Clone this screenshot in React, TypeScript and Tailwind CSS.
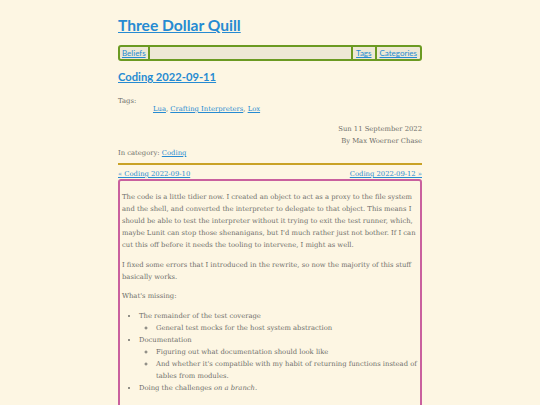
import React from "react";

const serif = "font-['DejaVu_Serif',serif]";
const sans = "font-['Lato','Open_Sans',sans-serif]";
const link = "text-[#268bd2] underline";

export default function App() {
  return (
    <div className={`h-[405px] overflow-hidden bg-[#fdf6e3] ${serif} text-[#6e6e6a]`}>
      <div className="mx-auto w-[304px] pt-[13px]">
        <h1 className={`${sans} text-[15.6px] leading-[24px] font-bold`}>
          <a className={link} href="#">Three Dollar Quill</a>
        </h1>
        <nav
          className={`${sans} mt-[8px] flex h-[16px] items-stretch rounded-[3px] border-2 border-[#6b9a22] bg-[#eee8d5] text-[8px] leading-[12px]`}
        >
          <a className={`${link} px-[2px] border-r-2 border-[#6b9a22]`} href="#">Beliefs</a>
          <div className="flex-1" />
          <a className={`${link} px-[3px] border-l-2 border-[#6b9a22]`} href="#">Tags</a>
          <a className={`${link} px-[3px] border-l-2 border-[#6b9a22]`} href="#">Categories</a>
        </nav>
        <h2 className={`${sans} mt-[6px] text-[11.2px] leading-[20px] font-bold`}>
          <a className={link} href="#">Coding 2022-09-11</a>
        </h2>
        <div className="mt-[10px] text-[6.8px] leading-[8px]">
          <div>Tags:</div>
          <div className="ml-[35px]">
            <a className={link} href="#">Lua</a>, <a className={link} href="#">Crafting Interpreters</a>,{" "}
            <a className={link} href="#">Lox</a>
          </div>
        </div>
        <div className="mt-[10px] text-right text-[6.8px] leading-[12px]">
          <div>Sun 11 September 2022</div>
          <div>By Max Woerner Chase</div>
        </div>
        <div className="text-[6.8px] leading-[12px]">
          In category: <a className={link} href="#">Coding</a>
        </div>
        <div className="mt-[4px] h-[2px] bg-[#c9a227]" />
        <div className="mt-[3px] flex justify-between text-[6.8px] leading-[12px]">
          <a className={link} href="#">« Coding 2022-09-10</a>
          <a className={link} href="#">Coding 2022-09-12 »</a>
        </div>
        <div className="-mt-[1px] rounded-[3px] border-2 border-[#c9609e] px-[2px] pt-[10px] pb-[20px] text-[6.8px] leading-[12px]">
          <p>
            The code is a little tidier now. I created an object to act as a proxy to the file system and the shell,
            and converted the interpreter to delegate to that object. This means I should be able to test the
            interpreter without it trying to exit the test runner, which, maybe Lunit can stop those shenanigans, but
            I'd much rather just not bother. If I can cut this off before it needs the tooling to intervene, I might as
            well.
          </p>
          <p className="mt-[8px]">
            I fixed some errors that I introduced in the rewrite, so now the majority of this stuff basically works.
          </p>
          <p className="mt-[7px]">What's missing:</p>
          <ul className="mt-[8px] list-disc pl-[17px]">
            <li>
              The remainder of the test coverage
              <ul className="list-[circle] pl-[17px]">
                <li>General test mocks for the host system abstraction</li>
              </ul>
            </li>
            <li>
              Documentation
              <ul className="list-[circle] pl-[17px]">
                <li>Figuring out what documentation should look like</li>
                <li>
                  And whether it's compatible with my habit of returning functions instead of tables from modules.
                </li>
              </ul>
            </li>
            <li>
              Doing the challenges <em>on a branch</em>.
            </li>
          </ul>
        </div>
      </div>
    </div>
  );
}
